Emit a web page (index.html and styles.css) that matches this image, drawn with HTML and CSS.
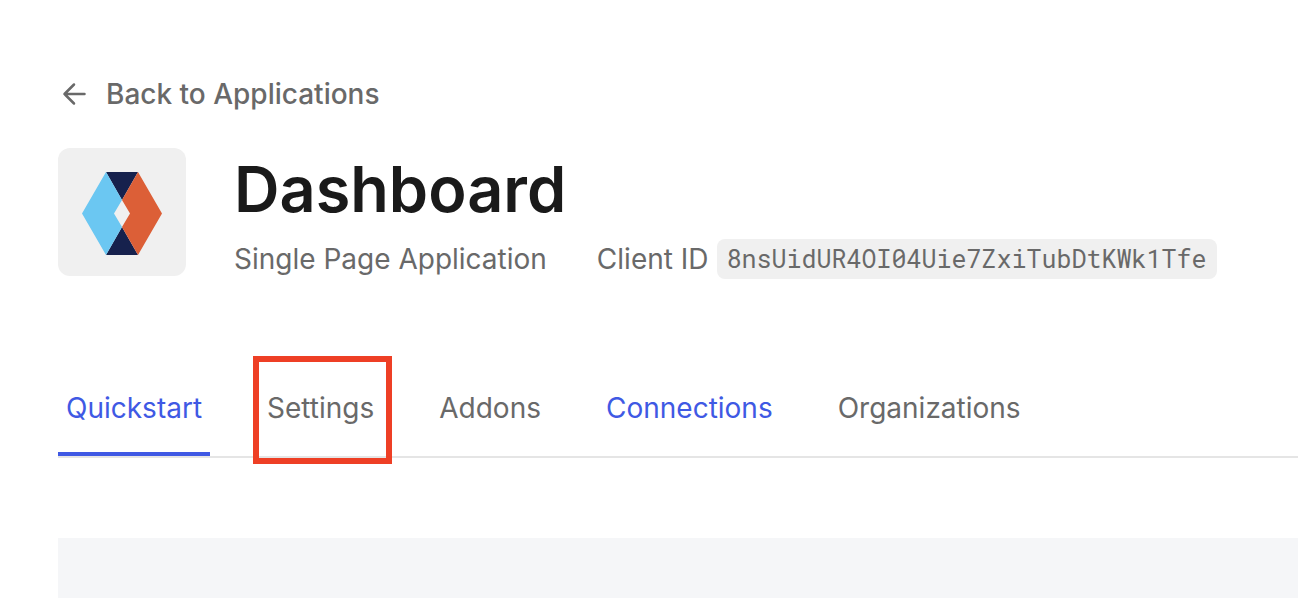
FILE: index.html
```html
<!DOCTYPE html>
<html lang="en">
<head>
<meta charset="utf-8">
<title>Dashboard</title>
<link rel="stylesheet" href="styles.css">
</head>
<body>
<main class="page">
  <a class="back" href="#">
    <svg class="back-icon" viewBox="0 0 24 24" aria-hidden="true"><path d="M22.500 12H2.500M12 2.500L2.500 12l9.500 9.500"/></svg>
    Back to Applications
  </a>
  <header class="app">
    <div class="app-logo">
      <svg viewBox="0 0 80 84" aria-hidden="true">
        <path fill="#16214d" d="M24 1h32L40 29zM24 84h32L40 56z"/>
        <path fill="#6bc7f2" d="M24 1L0 42.500l24 41.500 16-28-8-13.500 8-13.500z"/>
        <path fill="#dc5f37" d="M56 1l24 41.500-24 41.500-16-28 8-13.500-8-13.500z"/>
      </svg>
    </div>
    <div class="app-info">
      <h1 class="app-title">Dashboard</h1>
      <div class="app-meta">
        <span>Single Page Application</span>
        <span class="client">Client ID <code class="client-id">8nsUidUR4OI04Uie7ZxiTubDtKWk1Tfe</code></span>
      </div>
    </div>
  </header>
  <nav class="tabs">
    <a class="tab tab-active" href="#">Quickstart</a>
    <a class="tab tab-marked" href="#">Settings</a>
    <a class="tab" href="#">Addons</a>
    <a class="tab tab-link" href="#">Connections</a>
    <a class="tab" href="#">Organizations</a>
  </nav>
  <section class="panel"></section>
</main>
</body>
</html>
```
FILE: styles.css
```css
* { box-sizing: border-box; }
body {
  margin: 0;
  background: #fff;
  color: #696969;
  font-family: Inter, "Liberation Sans", sans-serif;
  font-size: 28px;
  line-height: 40px;
}
a { color: inherit; text-decoration: none; }
.page {
  display: flex;
  flex-direction: column;
  min-height: 100vh;
  padding: 74px 0 0 58px;
}
.back {
  display: flex;
  align-items: center;
  align-self: flex-start;
  gap: 20px;
  padding-left: 4px;
  font-weight: 500;
}
.back-icon {
  width: 24px;
  height: 24px;
  fill: none;
  stroke: #696969;
  stroke-width: 2.5;
  stroke-linecap: round;
  stroke-linejoin: round;
}
.app {
  display: flex;
  gap: 48px;
  margin-top: 34px;
}
.app-logo {
  display: flex;
  align-items: center;
  justify-content: center;
  flex: none;
  width: 128px;
  height: 128px;
  padding-top: 2px;
  border-radius: 12px;
  background: #f0f0f0;
}
.app-logo svg { width: 80px; height: 84px; }
.app-title {
  margin: 0;
  padding-top: 3px;
  color: #1a1a1a;
  font-size: 63px;
  font-weight: 600;
  line-height: 76px;
}
.app-meta {
  display: flex;
  gap: 50px;
  margin-top: 12px;
  white-space: nowrap;
}
.client {
  display: flex;
  align-items: center;
  gap: 8px;
}
.client-id {
  padding: 0 10px;
  border-radius: 8px;
  background: #f0f0f0;
  font-family: "Roboto Mono", "DejaVu Sans Mono", monospace;
  font-size: 25px;
}
.tabs {
  display: flex;
  gap: 49px;
  margin-top: 79px;
  border-bottom: 2px solid #e5e5e5;
}
.tab {
  position: relative;
  padding: 30px 8px 28px;
}
.tab-active { color: #3f59e4; }
.tab-active::after {
  content: "";
  position: absolute;
  inset: auto 0 0;
  height: 4px;
  background: #3f59e4;
}
.tab-link { color: #3f59e4; }
.tab-marked::before {
  content: "";
  position: absolute;
  inset: -2px -10px -8px -6px;
  border: 6px solid #ee3f25;
}
.panel {
  flex: 1;
  min-height: 60px;
  margin-top: 80px;
  background: #f5f6f8;
}
```
